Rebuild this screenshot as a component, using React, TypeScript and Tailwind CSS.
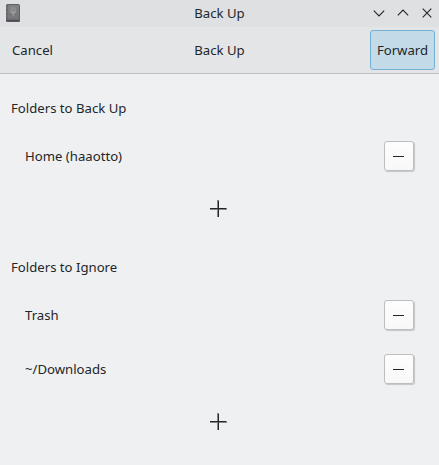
import React from "react";

function DriveIcon() {
  return (
    <svg width="16" height="20" viewBox="0 0 16 20" aria-hidden="true">
      <defs>
        <linearGradient id="drive" x1="0" y1="0" x2="0" y2="1">
          <stop offset="0" stopColor="#818183" />
          <stop offset="1" stopColor="#747476" />
        </linearGradient>
      </defs>
      <rect x="1" y="1" width="14" height="18" rx="1.5" fill="#606065" />
      <rect x="2.5" y="2" width="11.5" height="14.6" rx="0.5" fill="url(#drive)" />
      <rect x="1.5" y="17" width="13" height="1.5" fill="#504c59" />
      <path d="M1 5h1M1 9h1M1 13h1" stroke="#8b8b8f" />
      <circle cx="8.2" cy="7" r="3.2" fill="#8c8c8e" />
      <path d="M5.5 8.5L8.2 10.5L11 8.5M8.2 9.5V13.5" fill="none" stroke="#a0a0a1" strokeWidth="1.2" />
    </svg>
  );
}

function RemoveButton({ label }: { label: string }) {
  return (
    <button
      aria-label={label}
      className="flex h-[30px] w-[30px] items-center justify-center rounded-[3px] border border-[#bcbec0] bg-linear-to-b from-[#fdfdfd] to-[#f8f8f8] shadow-[1px_1px_1px_rgba(0,0,0,0.18)]"
    >
      <svg width="16" height="16" viewBox="0 0 16 16">
        <path d="M2 8.5H13" stroke="#232629" />
      </svg>
    </button>
  );
}

function FolderRow({ name }: { name: string }) {
  return (
    <div className="flex h-[54px] items-center justify-between pr-[25px] pl-[25px]">
      <span>{name}</span>
      <RemoveButton label={`Remove ${name}`} />
    </div>
  );
}

function AddButton() {
  return (
    <button aria-label="Add folder" className="flex h-[51px] w-full items-center justify-center pr-0.5">
      <svg width="17" height="17" viewBox="0 0 17 17" shapeRendering="crispEdges">
        <path d="M7.5 0V17M8 0.5H9M0 9.5H17M16.5 8V9" stroke="#85878a" />
        <path d="M8.5 1V17M0 8.5H16" stroke="#232629" />
      </svg>
    </button>
  );
}

function FolderSection({ title, folders }: { title: string; folders: string[] }) {
  return (
    <section>
      <h2 className="flex h-[42px] items-center px-[11px]">{title}</h2>
      {folders.map((name) => (
        <FolderRow key={name} name={name} />
      ))}
      <AddButton />
    </section>
  );
}

export default function App() {
  return (
    <div className="h-[465px] w-[439px] overflow-hidden bg-[#eff0f1] font-['Noto_Sans',sans-serif] text-[13.16px] leading-[18px] text-[#232629]">
      <header className="grid h-[27px] grid-cols-[1fr_auto_1fr] items-center bg-[#dee0e2] pb-[2px]">
        <div className="pl-[5px]">
          <DriveIcon />
        </div>
        <span>Back Up</span>
        <div className="flex items-center justify-end gap-2 pr-1">
          {["M2.8 5.7L8 10.9L13.2 5.7", "M2.8 10.3L8 5.1L13.2 10.3", "M3.7 3.7L12.3 12.3M12.3 3.7L3.7 12.3"].map((d) => (
            <svg key={d} width="16" height="16" viewBox="0 0 16 16" fill="none" stroke="#232629" strokeWidth="1.1">
              <path d={d} />
            </svg>
          ))}
        </div>
      </header>
      <nav className="grid h-[47px] grid-cols-[1fr_auto_1fr] items-center border-b border-[#bcbec0] bg-[#e3e5e7]">
        <button className="justify-self-start pl-3">Cancel</button>
        <span>Back Up</span>
        <button className="mr-1 h-10 w-[65px] justify-self-end rounded-[3px] border border-[#74b0d2] bg-[#c3dbe9]">
          Forward
        </button>
      </nav>
      <main className="flex flex-col gap-3 pt-[13px]">
        <FolderSection title="Folders to Back Up" folders={["Home (haaotto)"]} />
        <FolderSection title="Folders to Ignore" folders={["Trash", "~/Downloads"]} />
      </main>
    </div>
  );
}
